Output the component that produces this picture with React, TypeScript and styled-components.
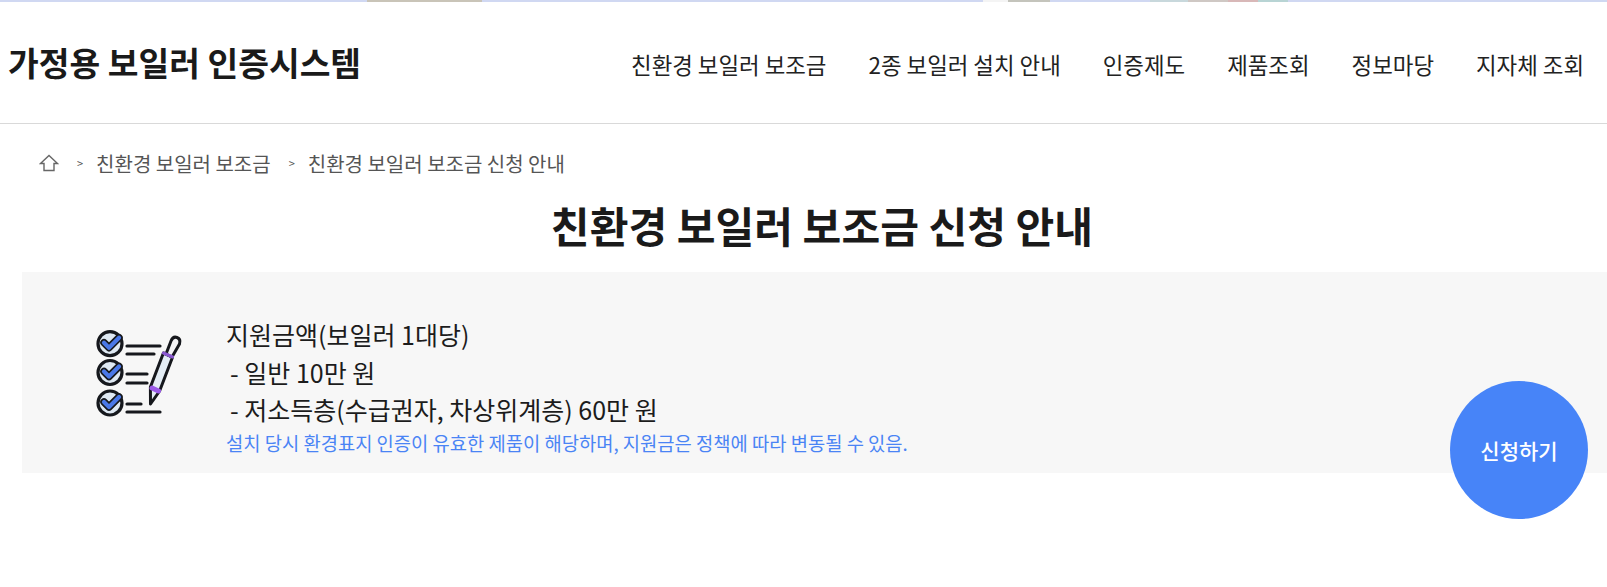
import React from "react";
import styled, { createGlobalStyle } from "styled-components";

const navItems = [
  "친환경 보일러 보조금",
  "2종 보일러 설치 안내",
  "인증제도",
  "제품조회",
  "정보마당",
  "지자체 조회",
];

const stripSegments = [
  { left: 367, width: 115, color: "#c9c4b8" },
  { left: 983, width: 25, color: "#f4f4f4" },
  { left: 1008, width: 42, color: "#c4c4bc" },
  { left: 1150, width: 38, color: "#c8d8dc" },
  { left: 1188, width: 40, color: "#cfc8c4" },
  { left: 1228, width: 30, color: "#d8b8b8" },
  { left: 1258, width: 30, color: "#b8d4d4" },
];

const GlobalStyle = createGlobalStyle`
  html, body {
    margin: 0;
    padding: 0;
    background: #fff;
    font-family: "Noto Sans CJK KR", "Noto Sans", sans-serif;
    overflow: hidden;
  }
`;

const Page = styled.div`
  width: 1607px;
  height: 587px;
  overflow: hidden;
`;

const TopStrip = styled.div`
  position: relative;
  height: 2px;
  background: #d0d8f2;
`;

const StripSegment = styled.span`
  position: absolute;
  top: 0;
  height: 2px;
`;

const Header = styled.header`
  height: 122px;
  box-sizing: border-box;
  border-bottom: 1px solid #d9d9d9;
  display: flex;
  align-items: center;
  justify-content: space-between;
  padding: 0 23px 0 8px;
`;

const Logo = styled.h1`
  margin: -2px 0 0;
  font-size: 33.4px;
  font-weight: 700;
  color: #1a1a1a;
`;

const Nav = styled.nav`
  display: flex;
  gap: 42px;
  margin-top: 2px;
`;

const NavItem = styled.a`
  font-size: 22.4px;
  color: #222;
`;

const Breadcrumb = styled.div`
  display: flex;
  align-items: center;
  height: 30px;
  margin-top: 24px;
  padding-left: 39px;
  font-size: 20px;
  color: #555;
`;

const Sep = styled.span`
  font-size: 11px;
  margin: 0 13px 0 18px;
`;

const Title = styled.h2`
  margin: 17px 0 0;
  padding-left: 37px;
  text-align: center;
  font-size: 42.15px;
  line-height: 60px;
  font-weight: 700;
  color: #1a1a1a;
`;

const Panel = styled.section`
  position: relative;
  margin: 17px 0 0 22px;
  height: 201px;
  background: #f7f7f7;
  display: flex;
  align-items: flex-start;
`;

const IconBox = styled.div`
  width: 204px;
  padding: 56px 0 0 72px;
  box-sizing: border-box;
`;

const Info = styled.div`
  padding-top: 44px;
  font-size: 25px;
  line-height: 37.5px;
  color: #1c1c1c;
`;

const InfoLine = styled.div`
  padding-left: 4px;
`;

const Note = styled.div`
  margin-top: 2px;
  font-size: 18.75px;
  line-height: 24px;
  color: #4a84f5;
`;

const ApplyButton = styled.button`
  position: absolute;
  right: 19px;
  top: 109px;
  width: 138px;
  height: 138px;
  border: none;
  border-radius: 50%;
  background: #4784f8;
  color: #fff;
  font: 500 21px "Noto Sans CJK KR", sans-serif;
`;

const ChecklistIcon = () => (
  <svg width="90" height="90" viewBox="0 0 90 90" fill="none" strokeLinecap="round" strokeLinejoin="round">
    {[15.7, 44.5, 75].map((cy) => (
      <g key={cy}>
        <circle cx="16" cy={cy} r="12" fill="#dfe9f3" stroke="#16181d" strokeWidth="3.2" />
        <path d={`M10 ${cy - 1} l5 5 l10 -10`} stroke="#16181d" strokeWidth="7.5" />
        <path d={`M10 ${cy - 1} l5 5 l10 -10`} stroke="#4a78e8" strokeWidth="4.2" />
      </g>
    ))}
    <path d="M33 18H66M33 26H60M33 46H53M33 55H53M33 76H47M33 84H66" stroke="#16181d" strokeWidth="3.2" />
    <path d="M56.4 59 L69.4 25 L78.6 29 L65.6 63 L56.5 76 Z" fill="#e4edf5" stroke="#16181d" strokeWidth="3" />
    <path d="M72 26 L77 13 Q79 8 83 9.5 Q87 11 85.5 16 L78 29 Z" fill="#f4f4f6" stroke="#16181d" strokeWidth="3" />
    <path d="M69.4 25 L78.6 29" stroke="#8a58d0" strokeWidth="3" />
    <path d="M58 60 L64.5 63" stroke="#9a5ae8" strokeWidth="5" />
  </svg>
);

const App: React.FC = () => {
  return (
    <Page>
      <GlobalStyle />
      <TopStrip>
        {stripSegments.map((s) => (
          <StripSegment key={s.left} style={{ left: s.left, width: s.width, background: s.color }} />
        ))}
      </TopStrip>
      <Header>
        <Logo>가정용 보일러 인증시스템</Logo>
        <Nav>
          {navItems.map((item) => (
            <NavItem key={item}>{item}</NavItem>
          ))}
        </Nav>
      </Header>
      <Breadcrumb>
        <svg width="20" height="20" viewBox="0 0 20 20" fill="none" stroke="#666" strokeWidth="1.4">
          <path d="M1.5 10.5 L10 2.5 L18.5 10.5 H15 V17.5 H5 V10.5 Z" />
        </svg>
        <Sep>&gt;</Sep>
        <span>친환경 보일러 보조금</span>
        <Sep>&gt;</Sep>
        <span>친환경 보일러 보조금 신청 안내</span>
      </Breadcrumb>
      <Title>친환경 보일러 보조금 신청 안내</Title>
      <Panel>
        <IconBox>
          <ChecklistIcon />
        </IconBox>
        <Info>
          <div>지원금액(보일러 1대당)</div>
          <InfoLine>- 일반 10만 원</InfoLine>
          <InfoLine>- 저소득층(수급권자, 차상위계층) 60만 원</InfoLine>
          <Note>설치 당시 환경표지 인증이 유효한 제품이 해당하며, 지원금은 정책에 따라 변동될 수 있음.</Note>
        </Info>
        <ApplyButton>신청하기</ApplyButton>
      </Panel>
    </Page>
  );
};

export default App;
